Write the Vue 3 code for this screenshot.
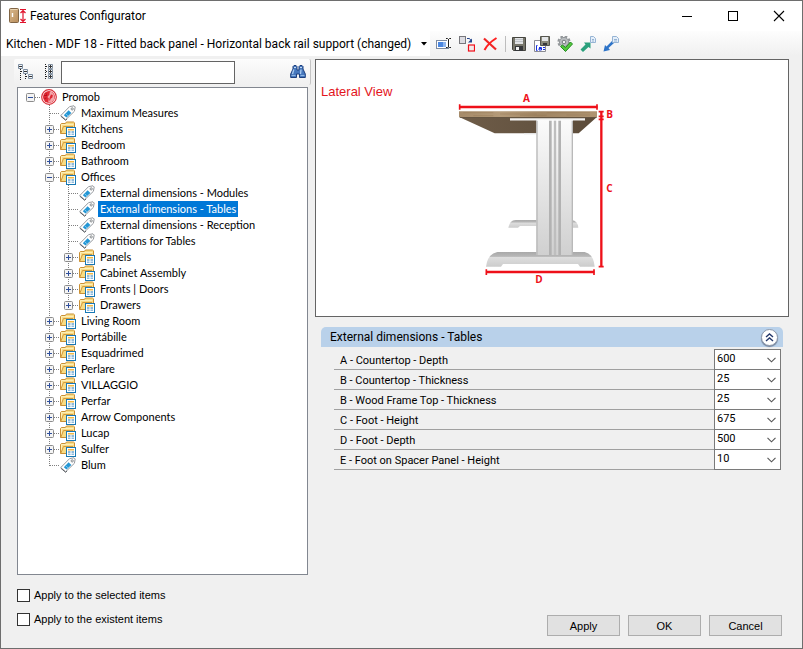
<script setup>
import { computed, ref } from 'vue'

const folder = (label, children = []) => ({ label, kind: 'folder', children })
const tag = (label) => ({ label, kind: 'tag' })

const tree = {
  label: 'Promob',
  kind: 'root',
  children: [
    tag('Maximum Measures'),
    folder('Kitchens'),
    folder('Bedroom'),
    folder('Bathroom'),
    folder('Offices', [
      tag('External dimensions - Modules'),
      tag('External dimensions - Tables'),
      tag('External dimensions - Reception'),
      tag('Partitions for Tables'),
      folder('Panels'),
      folder('Cabinet Assembly'),
      folder('Fronts | Doors'),
      folder('Drawers'),
    ]),
    folder('Living Room'),
    folder('Portábille'),
    folder('Esquadrimed'),
    folder('Perlare'),
    folder('VILLAGGIO'),
    folder('Perfar'),
    folder('Arrow Components'),
    folder('Lucap'),
    folder('Sulfer'),
    tag('Blum'),
  ],
}

const open = ref(new Set(['Promob', 'Offices']))
const selected = ref('External dimensions - Tables')

// Flattens the visible part of the tree; guides tell which ancestor lines continue.
const rows = computed(() => {
  const out = []
  const walk = (node, guides, last) => {
    const isOpen = open.value.has(node.label)
    out.push({ ...node, guides, last, isOpen, level: guides.length })
    if (isOpen && node.children) {
      const next = [...guides, !last]
      node.children.forEach((c, i) => walk(c, next, i === node.children.length - 1))
    }
  }
  walk(tree, [], true)
  return out
})

function toggle(label) {
  const next = new Set(open.value)
  next.has(label) ? next.delete(label) : next.add(label)
  open.value = next
}

const groupOpen = ref(true)
const fields = ref([
  { id: 'a', label: 'A - Countertop - Depth', value: '600' },
  { id: 'b1', label: 'B - Countertop - Thickness', value: '25' },
  { id: 'b2', label: 'B - Wood Frame Top - Thickness', value: '25' },
  { id: 'c', label: 'C - Foot - Height', value: '675' },
  { id: 'd', label: 'D - Foot - Depth', value: '500' },
  { id: 'e', label: 'E - Foot on Spacer Panel - Height', value: '10' },
])

const search = ref('')
const applySelected = ref(false)
const applyExistent = ref(false)
</script>

<template>
  <div class="window">
    <svg class="sprite" aria-hidden="true">
      <symbol id="i-root" viewBox="0 0 16 16">
        <circle cx="8" cy="8" r="7.3" fill="#fff" stroke="#d8303a" stroke-width="1.2" />
        <circle cx="8" cy="8" r="6" fill="#e02a35" />
        <path d="M9.2 2.600a5.500 5.500 0 0 0-.8 3.200l-2 2.200 1.400 1.200-.6 4.200c3.400.6 6-1.600 6.300-5C13.400 5.400 11.800 3 9.200 2.600z" fill="#f3a5aa" />
        <path d="M10 5.500l1.800.6-.4 2.500-1.800 1.200-.6 2-.8-.6.600-3z" fill="#dc2430" />
        <path d="M3 6.500h3M4.500 4.500l1.500 1M3.500 9.500l2-.5" stroke="#b8101c" />
      </symbol>
      <symbol id="i-folder" viewBox="0 0 16 16">
        <path d="M.5 12.500V3.500l.9-1h4l1-1.500h7.100l1 .8v6.700L12.600 12.500z" fill="#f9dc83" stroke="#c98f35" />
        <path d="M1.500 10V3.500h12" fill="none" stroke="#fdeeb9" />
        <path d="M.8 12.300L3.500 5.500h9.500" fill="none" stroke="#d29a3c" />
        <rect x="6.500" y="6.500" width="9" height="9" fill="#fff" stroke="#1878b4" />
        <path d="M8 8h6v1.500H8z" fill="#f2b843" />
        <path d="M8 10h2.500v2H8zM11.500 10H14v2h-2.500zM8 12.500h2.500v1.500H8zM11.500 12.500H14v1.500h-2.500z" fill="#8fbbdb" />
      </symbol>
      <symbol id="i-tag" viewBox="0 0 16 16">
        <path d="M.8 10.500L9.600 1.600 14 .8 15.200 2l-.8 4.300-8.800 8.500z" fill="#fff" stroke="#96999d" />
        <path d="M3.800 10.200l4.800-4.900 2.800 2.600-4.900 4.700z" fill="#2496d4" />
        <path d="M5.500 8.600l2.700 2.400" stroke="#77c4ec" />
        <circle cx="12.200" cy="3.900" r="1.100" fill="#fff" stroke="#85898c" />
        <path d="M.8 11.200l4.800 4L7 14" fill="none" stroke="#5b6065" />
      </symbol>
    </svg>

    <header class="titlebar">
      <svg class="app-icon" width="18" height="16" viewBox="0 0 18 16">
        <defs>
          <linearGradient id="wood" x1="0" y1="0" x2="1" y2="1">
            <stop offset="0" stop-color="#d8b98e" />
            <stop offset="1" stop-color="#b98d5b" />
          </linearGradient>
        </defs>
        <rect x=".5" y=".5" width="9" height="14" rx="1" fill="url(#wood)" stroke="#806545" />
        <path d="M1.500 1.500h7" stroke="#ead4b2" />
        <path d="M3.500 5v4" stroke="#fff" stroke-width="1.400" />
        <path d="M11 1.500h6M11 14.500h6M14 2v12M11.500 5L14 2.500 16.500 5M11.500 11l2.500 2.500 2.500-2.500" fill="none" stroke="#e0122b" stroke-width="1.200" />
      </svg>
      <h1>Features Configurator</h1>
      <button class="sys" type="button" aria-label="Minimize">
        <svg width="12" height="12"><path d="M1 6.500h10" stroke="#000" /></svg>
      </button>
      <button class="sys" type="button" aria-label="Maximize">
        <svg width="12" height="12"><rect x="1.500" y="1.500" width="9" height="9" fill="none" stroke="#000" /></svg>
      </button>
      <button class="sys" type="button" aria-label="Close">
        <svg width="12" height="12"><path d="M1 1l10 10M11 1L1 11" stroke="#000" stroke-width="1.100" /></svg>
      </button>
    </header>

    <div class="toolbar" role="toolbar" aria-label="Configuration">
      <button class="preset" type="button" aria-haspopup="listbox">
        <span>Kitchen - MDF 18 - Fitted back panel - Horizontal back rail support (changed)</span>
        <svg width="7" height="4"><path d="M0 0h6L3 3.500z" fill="#000" /></svg>
      </button>
      <button class="tool" type="button" aria-label="Rename">
        <svg width="16" height="16" viewBox="0 0 16 16">
          <rect x=".5" y="4.500" width="12" height="8" fill="#fff" stroke="#7d8ba1" />
          <rect x="2" y="6" width="5" height="5" fill="#4a86e0" />
          <rect x="7" y="6" width="3" height="5" fill="#8eb6ef" />
          <path d="M12.500 3v8" stroke="#fff" stroke-width="3" />
          <path d="M10 2.500h1.500l1 1 1-1H15M12.500 3v8M10 11.500h1.500l1-1 1 1H15" fill="none" stroke="#222" />
        </svg>
      </button>
      <button class="tool" type="button" aria-label="Replace">
        <svg width="16" height="16" viewBox="0 0 16 16">
          <rect x=".5" y=".5" width="6" height="7" fill="#dcdce2" stroke="#77777c" />
          <path d="M8 2.500h2.500l1.500 2" fill="none" stroke="#24458c" />
          <path d="M13 2.500v4H9z" fill="#24458c" />
          <rect x="9.500" y="9" width="6" height="6" fill="#f3e9ea" stroke="#f00e18" stroke-width="1.200" />
        </svg>
      </button>
      <button class="tool" type="button" aria-label="Delete">
        <svg width="16" height="16" viewBox="0 0 16 16">
          <path d="M2 2.500L14 13.500" stroke="#f02525" stroke-width="2.200" />
          <path d="M14.500 2C9 5.500 5 9 2.500 14" fill="none" stroke="#ff2020" stroke-width="2" />
        </svg>
      </button>
      <span class="divider"></span>
      <button class="tool" type="button" aria-label="Save">
        <svg width="16" height="16" viewBox="0 0 16 16">
          <path d="M1.500 1.500h13v13h-12l-1-1z" fill="#77766a" stroke="#45453f" />
          <rect x="4" y="2" width="8" height="6" fill="#e2e4e6" />
          <path d="M4 3.500h8M4 5.500h8" stroke="#c0c4c8" />
          <rect x="4" y="10" width="8" height="5" fill="#35373a" />
          <rect x="5" y="11" width="3" height="3" fill="#f2f2f2" />
        </svg>
      </button>
      <button class="tool" type="button" aria-label="Save as">
        <svg width="16" height="16" viewBox="0 0 16 16">
          <path d="M.5 4.500h11v11H.5z" fill="#fff" stroke="#8a8a92" />
          <path d="M6.500.5h9v9h-9z" fill="#8a897b" stroke="#55554e" />
          <path d="M8 1h6v4H8z" fill="#e4e6e8" />
          <path d="M9 7h4v2H9z" fill="#35373a" />
          <path d="M3.500 9.500h-1v5h1M5 11.500h2.500v2.500H5v-1.500h2" fill="none" stroke="#1630e0" />
          <path d="M9 11.500h2M9 13.500h2" stroke="#1630e0" />
        </svg>
      </button>
      <button class="tool" type="button" aria-label="Validate">
        <svg width="16" height="16" viewBox="0 0 16 16">
          <circle cx="7" cy="6" r="5.600" fill="none" stroke="#929699" stroke-width="2" stroke-dasharray="2.600 1.800" />
          <circle cx="7" cy="6" r="4.600" fill="#b9bdc0" stroke="#929699" />
          <circle cx="7" cy="6" r="1.800" fill="#f1f2f3" stroke="#787c80" />
          <path d="M3.500 10.500l2-1.500 3 2.500L13.500 6l2 2-7 7.500z" fill="#54c83c" stroke="#258b24" />
        </svg>
      </button>
      <button class="tool" type="button" aria-label="Export">
        <svg width="16" height="16" viewBox="0 0 16 16">
          <path d="M.5 13.500l5-5L4 6.500h6.500v6l-2-1.500-5.500 5z" fill="#2ba07c" />
          <path d="M10.500.5h3l2 2v4h-5z" fill="#e5effa" stroke="#96b4d4" />
          <path d="M12 3.500h2M12 5h2" stroke="#96b4d4" />
        </svg>
      </button>
      <button class="tool" type="button" aria-label="Import">
        <svg width="16" height="16" viewBox="0 0 16 16">
          <path d="M9 5l2 2-5.500 5 1.500 2-6.500 1.500L2 9l1.500 1.500z" fill="#2e74c8" />
          <path d="M9.500.5h4l2 2v4h-6z" fill="#e5effa" stroke="#96b4d4" />
          <path d="M11 3.500h3M11 5h3" stroke="#96b4d4" />
        </svg>
      </button>
    </div>

    <main class="body">
      <section class="left">
        <div class="tree-tools">
          <button class="tool" type="button" aria-label="Collapse all">
            <svg width="16" height="16" viewBox="0 0 16 16">
              <path d="M2.500 5v11M7.500 10v6" stroke="#222" stroke-dasharray="1 1" />
              <path d="M3 7.500h3M8 12.500h3" stroke="#222" stroke-dasharray="1 1" />
              <path d="M.5.500h4v4h-4zM5.500 5.500h4v4h-4zM10.500 10.500h4v4h-4z" fill="#f2f5f8" stroke="#7e8fa2" />
              <path d="M1 2.500h3M6 7.500h3M11 12.500h3" stroke="#333" />
            </svg>
          </button>
          <button class="tool narrow" type="button" aria-label="Expand all">
            <svg width="8" height="16" viewBox="0 0 8 16">
              <path d="M.5 0v16" stroke="#222" stroke-dasharray="1 1" />
              <path d="M1 2.500h2M1 7.500h2M1 12.500h2" stroke="#222" stroke-dasharray="1 1" />
              <path d="M3.500.500h4v4h-4zM3.500 5.500h4v4h-4zM3.500 10.500h4v4h-4z" fill="#f2f5f8" stroke="#8593a3" />
              <path d="M4 2.500h3M4 7.500h3M4 12.500h3M5.500 1v3M5.500 6v3M5.500 11v3" stroke="#333" />
            </svg>
          </button>
          <input v-model="search" class="search" type="text" aria-label="Search features" />
          <button class="tool find" type="button" aria-label="Find">
            <svg width="16" height="16" viewBox="0 0 16 16">
              <path d="M3 2.500l1-1h2l1 1V6h2V2.500l1-1h2l1 1V5l2.300 5v3.500H9.500V10h-3v3.500H.7V10L3 5z" fill="#4778bd" stroke="#1d3f7d" />
              <path d="M3.800 5.500L2.500 10M11 5.500l-.5 4.500" stroke="#a9cbf0" stroke-width="1.300" />
              <path d="M1.500 11.500h4M10.500 11.500h4" stroke="#8fb6e4" />
              <path d="M4 3.500h2M10 3.500h2" stroke="#c7dcf4" />
            </svg>
          </button>
        </div>

        <ul class="tree" role="tree" aria-label="Features">
          <li
            v-for="row in rows"
            :key="row.label"
            class="node"
            role="treeitem"
            :aria-level="row.level + 1"
            :aria-selected="row.label === selected"
          >
            <span v-for="(on, i) in row.guides" :key="i" class="guide">
              <svg v-if="on" width="19" height="16"><path d="M9.500 0v16" class="dots" /></svg>
            </span>
            <span class="guide">
              <svg width="19" height="16">
                <path v-if="row.level && row.last" d="M9.500 0v9" class="dots" />
                <path v-else-if="row.level" d="M9.500 0v16" class="dots" />
                <path d="M10 8.500h9" class="dots" />
              </svg>
              <button
                v-if="row.children"
                class="expander"
                type="button"
                :aria-label="(row.isOpen ? 'Collapse ' : 'Expand ') + row.label"
                @click="toggle(row.label)"
              >
                <svg width="9" height="9" viewBox="0 0 9 9">
                  <rect x=".5" y=".5" width="8" height="8" rx="1" fill="#f4f4f4" stroke="#8c8c8c" />
                  <path d="M2 4.500h5" stroke="#2f4f9c" />
                  <path v-if="!row.isOpen" d="M4.500 2v5" stroke="#2f4f9c" />
                </svg>
              </button>
            </span>
            <svg class="kind" width="16" height="16"><use :href="'#i-' + row.kind" /></svg>
            <button
              class="name"
              :class="{ active: row.label === selected }"
              type="button"
              @click="selected = row.label"
            >{{ row.label }}</button>
          </li>
        </ul>
      </section>

      <section class="right">
        <figure class="preview">
          <figcaption>Lateral View</figcaption>
          <svg class="drawing" width="224" height="215" viewBox="0 0 672 645" role="img" aria-label="Side view of a table">
            <defs>
              <linearGradient id="leg" x1="0" y1="0" x2="0" y2="1">
                <stop offset="0" stop-color="#fbfbfb" />
                <stop offset="1" stop-color="#d0d0d0" />
              </linearGradient>
              <linearGradient id="edge" x1="0" y1="0" x2="1" y2="0">
                <stop offset="0" stop-color="#a68b6a" />
                <stop offset=".3" stop-color="#b49a78" />
                <stop offset=".6" stop-color="#a18563" />
                <stop offset="1" stop-color="#af9471" />
              </linearGradient>
              <linearGradient id="under" x1="0" y1="0" x2="1" y2="0">
                <stop offset="0" stop-color="#6e5c48" />
                <stop offset="1" stop-color="#5c4c3a" />
              </linearGradient>
              <linearGradient id="foot" x1="0" y1="0" x2="0" y2="1">
                <stop offset="0" stop-color="#a9a9a9" />
                <stop offset=".3" stop-color="#b8b8b8" />
                <stop offset=".36" stop-color="#dedede" />
                <stop offset="1" stop-color="#cccccc" />
              </linearGradient>
            </defs>
            <path d="M205 443q4-22 22-23h168q18 2 20 23h-22l-5-5H240l-6 5z" fill="url(#foot)" />
            <path d="M59 112h411l-54 48H164z" fill="url(#under)" />
            <path d="M59 112h411" stroke="#5d4c38" stroke-width="3" />
            <path d="M57 94h414v17H57z" fill="url(#edge)" />
            <path d="M70 98h90M180 102h110M320 98h130M100 107h60M240 106h80M380 105h70" stroke="#8d6e4b" stroke-opacity=".45" stroke-width="2" />
            <path d="M210 118h225" stroke="#f3f3f3" stroke-width="7" />
            <path d="M252 161h40" stroke="#e3e3e3" stroke-width="4" />
            <path d="M138 560q5-39 34-44h262q27 6 30 44h-44l-6-8H189l-6 8z" fill="url(#foot)" />
            <path d="M289 120h110v405H289z" fill="url(#leg)" />
            <path d="M291 122v403M397 122v403" stroke="#b9b9b9" stroke-width="4" />
            <path d="M331 122v403M359 122v403" stroke="#b2b2b2" stroke-width="8" />
            <path d="M345 122v403" stroke="#bebebe" stroke-width="7" />
            <g fill="none" stroke="#ee1019" stroke-width="7">
              <path d="M58 81h414M139 576h324M484 115v445M484 95v20" />
              <path d="M59 73v16M471 73v16M139 568v17M462 568v17M476 560h15M476 95h15M476 109h15M476 118h15" stroke-width="5" />
            </g>
            <g class="dims">
              <text x="249" y="67">A</text>
              <text x="499" y="114">B</text>
              <text x="499" y="336">C</text>
              <text x="286" y="609">D</text>
            </g>
          </svg>
        </figure>

        <div class="group">
          <div class="group-head">
            <h2>External dimensions - Tables</h2>
            <button class="fold" type="button" aria-label="Collapse group" :aria-expanded="groupOpen" @click="groupOpen = !groupOpen">
              <svg width="9" height="9" viewBox="0 0 9 9">
                <path d="M1 4l3.500-3L8 4M1 8l3.500-3L8 8" fill="none" stroke="#24386b" stroke-width="1.400" />
              </svg>
            </button>
          </div>
          <div v-if="groupOpen" class="fields">
            <div v-for="f in fields" :key="f.id" class="field">
              <label :for="'field-' + f.id">{{ f.label }}</label>
              <div class="combo">
                <select :id="'field-' + f.id" v-model="f.value">
                  <option>{{ f.value }}</option>
                </select>
                <svg class="chevron" width="9" height="6"><path d="M.5.800l4 4 4-4" fill="none" stroke="#555" stroke-width="1.100" /></svg>
              </div>
            </div>
          </div>
        </div>
      </section>
    </main>

    <footer class="footer">
      <div class="checks">
        <label><input v-model="applySelected" type="checkbox" />Apply to the selected items</label>
        <label><input v-model="applyExistent" type="checkbox" />Apply to the existent items</label>
      </div>
      <div class="actions">
        <button type="button">Apply</button>
        <button type="button">OK</button>
        <button type="button">Cancel</button>
      </div>
    </footer>
  </div>
</template>

<style>
body {
  background: #f0f0f0;
}
</style>

<style scoped>
.window {
  box-sizing: border-box;
  display: flex;
  flex-direction: column;
  min-height: 100vh;
  border: 1px solid #6e6e6e;
  background: #f0f0f0;
  color: #000;
  font: 11px/16px "Liberation Sans", sans-serif;
}
.window * {
  box-sizing: border-box;
}
svg {
  display: block;
  flex: none;
}
button {
  font: inherit;
  color: inherit;
  padding: 0;
  border: 0;
  background: none;
}
.sprite {
  position: absolute;
  width: 0;
  height: 0;
}
.titlebar {
  display: flex;
  align-items: center;
  height: 30px;
  padding-left: 8px;
  background: #fff;
}
.titlebar h1 {
  flex: 1;
  margin: 0 0 0 3px;
  font: 12px/16px Roboto, sans-serif;
}
.sys {
  display: flex;
  align-items: center;
  justify-content: center;
  width: 46px;
  height: 30px;
}
.toolbar {
  display: flex;
  align-items: center;
  height: 25px;
  background: linear-gradient(#fdfdfd, #f0f0f0);
}
.preset {
  display: flex;
  align-items: center;
  gap: 10px;
  height: 25px;
  padding: 0 2px 0 5px;
  margin-right: 2px;
  background: #fff;
  font: 12px/16px Roboto, sans-serif;
  white-space: nowrap;
}
.tool {
  display: flex;
  align-items: center;
  justify-content: center;
  width: 23px;
  height: 23px;
}
.divider {
  width: 1px;
  height: 16px;
  margin: 0 1px 0 4px;
  background: #bdbdbd;
}
.body {
  flex: 1;
  display: grid;
  grid-template-columns: 297px minmax(0, 1fr);
  column-gap: 4px;
  padding: 3px 13px 0 13px;
}
.left {
  display: flex;
  flex-direction: column;
}
.tree-tools {
  display: flex;
  align-items: center;
  height: 26px;
  border-right: 1px solid #c4c4c4;
  border-radius: 2px;
  background: linear-gradient(#fcfcfc, #f0f0f0);
}
.tree-tools .narrow {
  margin-right: 1px;
}
.search {
  width: 174px;
  height: 23px;
  padding: 0 4px;
  border: 1px solid #646464;
  background: #fff;
  font: inherit;
}
.find {
  margin-left: auto;
  margin-right: 1px;
}
.tree {
  flex: 1;
  width: 291px;
  margin: 2px 0 0 3px;
  padding: 1px 3px;
  border: 1px solid #828790;
  background: #fff;
  list-style: none;
}
.node {
  display: flex;
  height: 16px;
}
.guide {
  position: relative;
  flex: none;
  width: 19px;
  height: 16px;
}
.dots {
  fill: none;
  stroke: #808080;
  stroke-dasharray: 1 1;
}
.expander {
  position: absolute;
  left: 5px;
  top: 4px;
}
.kind {
  margin: 0 3px 0 1px;
}
.name {
  height: 16px;
  padding: 0 2px;
  font: 11px/16px Lato, sans-serif;
  white-space: nowrap;
}
.name.active {
  background: #0078d7;
  color: #fff;
}
.right {
  min-width: 0;
}
.preview {
  display: grid;
  height: 258px;
  margin: 0;
  border: 1px solid #646464;
  background: #fff;
}
.preview > * {
  grid-area: 1 / 1;
}
.preview figcaption {
  padding: 24px 5px 0;
  color: #e3141c;
  font-size: 13px;
}
.drawing {
  justify-self: center;
  margin-top: 20px;
}
.dims {
  fill: #ee1019;
  font: bold 30px "Open Sans", sans-serif;
}
.group {
  margin: 10px 6px 0 6px;
}
.group-head {
  display: flex;
  align-items: center;
  justify-content: space-between;
  height: 20px;
  padding: 0 5px 0 9px;
  border-radius: 5px 5px 0 0;
  background: #b9d1ea;
}
.group-head h2 {
  margin: 0;
  font: 12px/16px Roboto, sans-serif;
}
.fold {
  display: flex;
  align-items: center;
  justify-content: center;
  width: 17px;
  height: 17px;
  border: 1px solid #8e99ab;
  border-radius: 50%;
  background: #fff;
  box-shadow: 0 1px 1px #6f7f98;
}
.fields {
  margin: 2px 2px 0 13px;
}
.field {
  display: flex;
  height: 20px;
}
.field label {
  flex: 1;
  padding: 3px 6px 0;
  border-bottom: 1px solid #a0a0a0;
  font: 11px/16px Roboto, sans-serif;
}
.field:first-child {
  height: 21px;
}
.field:first-child label {
  padding-top: 4px;
}
.field:first-child .combo {
  border-top: 1px solid #7a7a7a;
}
.combo {
  position: relative;
  width: 67px;
  border: solid #7a7a7a;
  border-width: 0 1px 1px;
  background: #fff;
}
.combo select {
  display: block;
  width: 100%;
  height: 18px;
  padding: 0 2px;
  border: 0;
  appearance: none;
  background: transparent;
  color: #000;
  font: 11px/18px Roboto, sans-serif;
}
.chevron {
  position: absolute;
  right: 4px;
  top: 7px;
  pointer-events: none;
}
.footer {
  display: flex;
  justify-content: space-between;
  padding: 12px 20px 12px 16px;
}
.checks {
  display: flex;
  flex-direction: column;
  gap: 8px;
  padding-bottom: 9px;
}
.checks label {
  display: flex;
  align-items: center;
  gap: 4px;
}
.checks input {
  appearance: none;
  width: 13px;
  height: 13px;
  margin: 0;
  border: 1px solid #333;
  background: #fff;
}
.checks input:checked {
  background: #333;
  box-shadow: inset 0 0 0 2px #fff;
}
.actions {
  display: flex;
  align-items: flex-end;
  gap: 8px;
}
.actions button {
  width: 73px;
  height: 21px;
  border: 1px solid #adadad;
  background: #e1e1e1;
}
</style>
